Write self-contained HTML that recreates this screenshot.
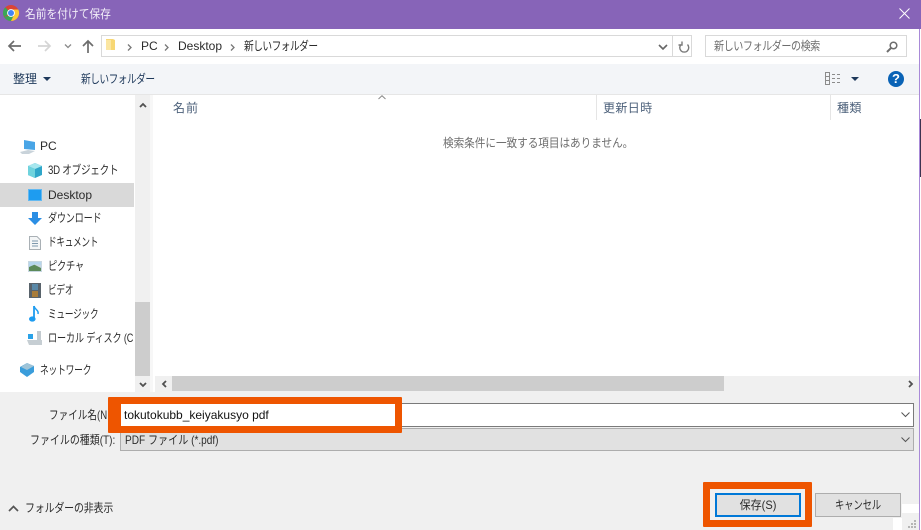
<!DOCTYPE html>
<html lang="ja"><head><meta charset="utf-8"><style>
html,body{margin:0;padding:0;width:921px;height:530px;overflow:hidden;background:#fff}
body{position:relative;font-family:"Liberation Sans","Noto Sans CJK JP",sans-serif;font-size:12px;color:#2b2b2b}
.a{position:absolute}.t{position:absolute;white-space:nowrap;line-height:16px;transform-origin:0 50%}
svg{position:absolute;overflow:visible}
</style></head><body>
<div class="a" style="left:0;top:0;width:921px;height:29px;background:#8764b8"></div>
<svg style="left:3px;top:5px" width="16" height="16" viewBox="0 0 16 16"><circle cx="8" cy="8" r="8" fill="#db4437"/><path d="M8 8L1 12A8 8 0 0 1 2.300 2.400Z" fill="#3aa757"/><path d="M1.100 12A8 8 0 0 0 8 16L11.500 9Z" fill="#3aa757"/><path d="M8 4.500H15.300A8 8 0 0 1 8 16L11 10Z" fill="#fcc934"/><circle cx="8" cy="8" r="3.900" fill="#fff"/><circle cx="8" cy="8" r="3" fill="#4285f4"/></svg>
<div class="t" style="left:25px;top:6px;color:#f2eef8;transform:scaleX(.895)">名前を付けて保存</div>
<svg style="left:899px;top:8px" width="11" height="11"><path d="M.5.5L10.500 10.500M10.500.5L.5 10.500" stroke="#fff" fill="none"/></svg>
<div class="a" style="left:0;top:29px;width:919px;height:35px;background:#fff"></div>
<svg style="left:8px;top:40px" width="13" height="12"><path d="M6 1L1 6L6 11M1 6H13" stroke="#6d6d6d" stroke-width="1.700" fill="none"/></svg>
<svg style="left:38px;top:40px" width="13" height="12"><path d="M7 1L12 6L7 11M12 6H0" stroke="#d5d5d5" stroke-width="1.700" fill="none"/></svg>
<svg style="left:64px;top:44px" width="8" height="5"><path d="M1 .5L4 3.500L7 .5" stroke="#8a8a8a" stroke-width="1.300" fill="none"/></svg>
<svg style="left:82px;top:40px" width="12" height="13"><path d="M1 6L6 1L11 6M6 1V13" stroke="#6d6d6d" stroke-width="1.700" fill="none"/></svg>
<div class="a" style="left:101px;top:35px;width:589px;height:20px;border:1px solid #d9d9d9;background:#fff"></div>
<div class="a" style="left:672px;top:36px;width:1px;height:20px;background:#d9d9d9"></div>
<svg style="left:106px;top:38px" width="10" height="13"><path d="M0 1H7L9 2V12H0Z" fill="#f7d774"/><path d="M0 2H5V12H0Z" fill="#fbe6a2"/></svg>
<svg style="left:127px;top:44px" width="5" height="7"><path d="M1 .5L4 3.500L1 6.500" stroke="#777" stroke-width="1.300" fill="none"/></svg>
<div class="t" style="left:141px;top:38px">PC</div>
<svg style="left:164px;top:44px" width="5" height="7"><path d="M1 .5L4 3.500L1 6.500" stroke="#777" stroke-width="1.300" fill="none"/></svg>
<div class="t" style="left:178px;top:38px">Desktop</div>
<svg style="left:230px;top:44px" width="5" height="7"><path d="M1 .5L4 3.500L1 6.500" stroke="#777" stroke-width="1.300" fill="none"/></svg>
<div class="t" style="left:244px;top:38px;letter-spacing:-.65px;transform:scaleX(.81)">新しいフォルダー</div>
<svg style="left:658px;top:44px" width="10" height="7"><path d="M1 1L5 5L9 1" stroke="#666" stroke-width="1.600" fill="none"/></svg>
<svg style="left:678px;top:40px" width="12" height="13"><path d="M9.500 3.500A4.500 4.500 0 1 1 3 3.500M4 .5V4H.5" transform="translate(0 1)" stroke="#7a7a7a" stroke-width="1.400" fill="none"/></svg>
<div class="a" style="left:705px;top:35px;width:200px;height:20px;border:1px solid #d9d9d9;background:#fff"></div>
<div class="t" style="left:714px;top:38px;color:#6d6d6d;letter-spacing:-.55px;transform:scaleX(.84)">新しいフォルダーの検索</div>
<svg style="left:886px;top:41px" width="12" height="12"><circle cx="7.500" cy="4.500" r="3.300" stroke="#6d6d6d" stroke-width="1.500" fill="none"/><path d="M5 7L1 11" stroke="#6d6d6d" stroke-width="2" fill="none"/></svg>
<div class="a" style="left:0;top:64px;width:919px;height:30px;background:#f3f5f8"></div>
<div class="a" style="left:0;top:94px;width:919px;height:1px;background:#e6e6e6"></div>
<div class="t" style="left:13px;top:71px;color:#1e395b">整理</div>
<svg style="left:43px;top:77px" width="8" height="4"><path d="M0 0H8L4 4Z" fill="#1e395b"/></svg>
<div class="t" style="left:81px;top:71px;color:#1e395b;letter-spacing:-.65px;transform:scaleX(.81)">新しいフォルダー</div>
<svg style="left:825px;top:72px" width="16" height="13"><path d="M.5.500H4.500V12.500H.5ZM.5 4.500H4.500M.5 8.500H4.500M7 2.500H10M12 2.500H15M7 6.500H10M12 6.500H15M7 10.500H10M12 10.500H15" stroke="#8b8b8b" fill="none"/></svg>
<svg style="left:851px;top:77px" width="8" height="4"><path d="M0 0H8L4 4Z" fill="#1e395b"/></svg>
<div class="a" style="left:888px;top:71px;width:16px;height:16px;border-radius:50%;background:#0a63b6"></div>
<div class="t" style="left:888px;top:71px;width:16px;text-align:center;color:#fff;font-weight:bold;font-size:13px">?</div>
<div class="a" style="left:135px;top:95px;width:15px;height:297px;background:#f0f0f0"></div>
<div class="a" style="left:135px;top:302px;width:15px;height:74px;background:#cdcdcd"></div>
<svg style="left:139px;top:102px" width="8" height="6"><path d="M1 5L4 2L7 5" stroke="#505050" stroke-width="1.800" fill="none"/></svg>
<svg style="left:139px;top:382px" width="8" height="6"><path d="M1 1L4 4L7 1" stroke="#505050" stroke-width="1.800" fill="none"/></svg>
<div class="a" style="left:150px;top:95px;width:3px;height:297px;background:#f7f7f7"></div>
<div class="a" style="left:0;top:183px;width:134px;height:24px;background:#d9d9d9"></div>
<svg style="left:20px;top:140px" width="16" height="14"><path d="M4 0L15 2V10L4 9Z" fill="#49a5e6"/><path d="M0 12L8 10L15 11L9 14H2Z" fill="#c9d3da"/></svg>
<div class="t" style="left:40px;top:138px">PC</div>
<svg style="left:28px;top:163px" width="14" height="15"><path d="M7 0L14 3V12L7 15L0 12V3Z" fill="#2fa6c9"/><path d="M7 0L14 3L7 6L0 3Z" fill="#a7e7ee"/><path d="M0 3L7 6V15L0 12Z" fill="#6fd3dd"/></svg>
<div class="t" style="left:48px;top:162px;letter-spacing:-.3px;transform:scaleX(.8)">3D オブジェクト</div>
<div class="a" style="left:28px;top:189px;width:14px;height:12px;background:#1e9cf0;box-shadow:inset 0 0 0 1px #63b9f1"></div>
<div class="t" style="left:48px;top:187px">Desktop</div>
<svg style="left:28px;top:212px" width="14" height="13"><path d="M4 0H10V6H14L7 13L0 6H4Z" fill="#2b8ee4"/></svg>
<div class="t" style="left:48px;top:210px;letter-spacing:-.3px;transform:scaleX(.76)">ダウンロード</div>
<svg style="left:29px;top:236px" width="12" height="14"><path d="M.5.500H8L11.500 4V13.500H.5Z" fill="#f4f6f7" stroke="#a9b0b5"/><path d="M3 5H9M3 7.500H9M3 10H9" stroke="#7d98ad"/></svg>
<div class="t" style="left:48px;top:234px;letter-spacing:-.4px;transform:scaleX(.72)">ドキュメント</div>
<svg style="left:28px;top:261px" width="14" height="11"><path d="M0 0H14V11H0Z" fill="#c8d8e2"/><path d="M1 6L5 3L13 7V10H1Z" fill="#5c8a5a"/><path d="M1 1H13V4L8 3L1 6Z" fill="#b6d6ee"/></svg>
<div class="t" style="left:48px;top:258px;letter-spacing:-.3px;transform:scaleX(.77)">ピクチャ</div>
<svg style="left:29px;top:283px" width="12" height="15"><path d="M0 0H12V15H0Z" fill="#59636b"/><path d="M3 1H9V7H3Z" fill="#5a89a8"/><path d="M3 8H9V14H3Z" fill="#a87c3a"/></svg>
<div class="t" style="left:48px;top:282px;letter-spacing:-.3px;transform:scaleX(.72)">ビデオ</div>
<svg style="left:29px;top:306px" width="11" height="16"><path d="M5 0V12" stroke="#1e9cf0" stroke-width="1.800" fill="none"/><path d="M5 0C6 4 10 4 9 8" stroke="#1e9cf0" stroke-width="1.500" fill="none"/><ellipse cx="3.300" cy="13" rx="3.300" ry="2.600" fill="#1e9cf0"/></svg>
<div class="t" style="left:48px;top:306px;letter-spacing:-.3px;transform:scaleX(.72)">ミュージック</div>
<svg style="left:27px;top:331px" width="16" height="15"><path d="M0 9H15V14H2Z" fill="#c6ced3"/><path d="M1 3H6V8H1Z" fill="#2aa2e8"/><path d="M10 0H14V9H10Z" fill="#c3cbd0"/></svg>
<div class="a" style="left:0;top:330px;width:134px;height:16px;overflow:hidden"><div class="t" style="left:48px;top:0;letter-spacing:-.2px;transform:scaleX(.76)">ローカル ディスク (C:)</div></div>
<svg style="left:20px;top:363px" width="15" height="15"><path d="M7 0L14 3V9L7 14L0 9V4Z" fill="#3a9ddb"/><path d="M7 0L14 3L7 7L1 4Z" fill="#9fc4d8"/></svg>
<div class="t" style="left:40px;top:362px;letter-spacing:-.3px;transform:scaleX(.73)">ネットワーク</div>
<svg style="left:378px;top:95px" width="8" height="5"><path d="M.5 4L4 .7L7.500 4" stroke="#8a8a8a" fill="none"/></svg>
<div class="t" style="left:173px;top:100px;color:#4c607a;letter-spacing:1px">名前</div>
<div class="a" style="left:596px;top:95px;width:1px;height:25px;background:#e5e5e5"></div>
<div class="t" style="left:603px;top:100px;color:#4c607a;letter-spacing:.4px">更新日時</div>
<div class="a" style="left:830px;top:95px;width:1px;height:25px;background:#e5e5e5"></div>
<div class="t" style="left:837px;top:100px;color:#4c607a;letter-spacing:.4px">種類</div>
<div class="t" style="left:443px;top:135px;color:#6d6d6d;letter-spacing:-.05px;transform:scaleX(.886)">検索条件に一致する項目はありません。</div>
<div class="a" style="left:155px;top:376px;width:764px;height:16px;background:#f0f0f0"></div>
<div class="a" style="left:172px;top:376px;width:552px;height:15px;background:#cdcdcd"></div>
<svg style="left:161px;top:380px" width="6" height="8"><path d="M5 1L2 4L5 7" stroke="#505050" stroke-width="1.800" fill="none"/></svg>
<svg style="left:908px;top:380px" width="6" height="8"><path d="M1 1L4 4L1 7" stroke="#505050" stroke-width="1.800" fill="none"/></svg>
<div class="a" style="left:0;top:392px;width:919px;height:138px;background:#f0f0f0"></div>
<div class="t" style="left:49px;top:407px;transform:scaleX(.8)">ファイル名(N</div>
<div class="a" style="left:120px;top:403px;width:792px;height:22px;border:1px solid #7a7a7a;background:#fff"></div>
<svg style="left:901px;top:412px" width="9" height="6"><path d="M.5.500L4.500 4.500L8.500.5" stroke="#555" fill="none"/></svg>
<div class="t" style="left:30px;top:432px;transform:scaleX(.83)">ファイルの種類(T):</div>
<div class="a" style="left:120px;top:428px;width:792px;height:21px;border:1px solid #adadad;background:#e1e1e1"></div>
<div class="t" style="left:125px;top:432px;transform:scaleX(.84)">PDF ファイル (*.pdf)</div>
<svg style="left:901px;top:437px" width="9" height="6"><path d="M.5.500L4.500 4.500L8.500.5" stroke="#555" fill="none"/></svg>
<div class="a" style="left:108px;top:397px;width:274px;height:22px;border:7px solid #ee5500;border-left-width:13px;border-radius:1px;background:#fff"></div>
<div class="t" style="left:124px;top:407px;color:#111">tokutokubb_keiyakusyo pdf</div>
<svg style="left:8px;top:505px" width="11" height="7"><path d="M1 6L5.500 1.500L10 6" stroke="#555" stroke-width="1.700" fill="none"/></svg>
<div class="t" style="left:25px;top:500px;letter-spacing:-.2px;transform:scaleX(.83)">フォルダーの非表示</div>
<div class="a" style="left:703px;top:482px;width:95px;height:31px;border:7px solid #ee5500;border-radius:1px;background:#f0f0f0"></div>
<div class="a" style="left:715px;top:493px;width:82px;height:20px;border:2px solid #0078d7;background:#e1e1e1"></div>
<div class="t" style="left:715px;top:497px;width:86px;text-align:center;transform-origin:50% 50%;transform:scaleX(.92)">保存(S)</div>
<div class="a" style="left:815px;top:493px;width:84px;height:22px;border:1px solid #adadad;background:#e1e1e1"></div>
<div class="t" style="left:815px;top:497px;width:86px;text-align:center;letter-spacing:-.2px;transform-origin:50% 50%;transform:scaleX(.78)">キャンセル</div>
<div class="a" style="left:902px;top:504px;width:17px;height:9px;background:#fff"></div>
<div class="a" style="left:893px;top:518px;width:9px;height:12px;background:#fff"></div>
<svg style="left:908px;top:520px" width="10" height="9"><path d="M6 0H8V2H6ZM3 3H5V5H3ZM6 3H8V5H6ZM0 6H2V8H0ZM3 6H5V8H3ZM6 6H8V8H6Z" fill="#b5b5b5"/></svg>
<div class="a" style="left:919px;top:29px;width:1px;height:501px;background:#a98ad8"></div>
<div class="a" style="left:920px;top:29px;width:1px;height:501px;background:#fff"></div>
<div class="a" style="left:920px;top:119px;width:1px;height:58px;background:#3c3350"></div>
</body></html>
